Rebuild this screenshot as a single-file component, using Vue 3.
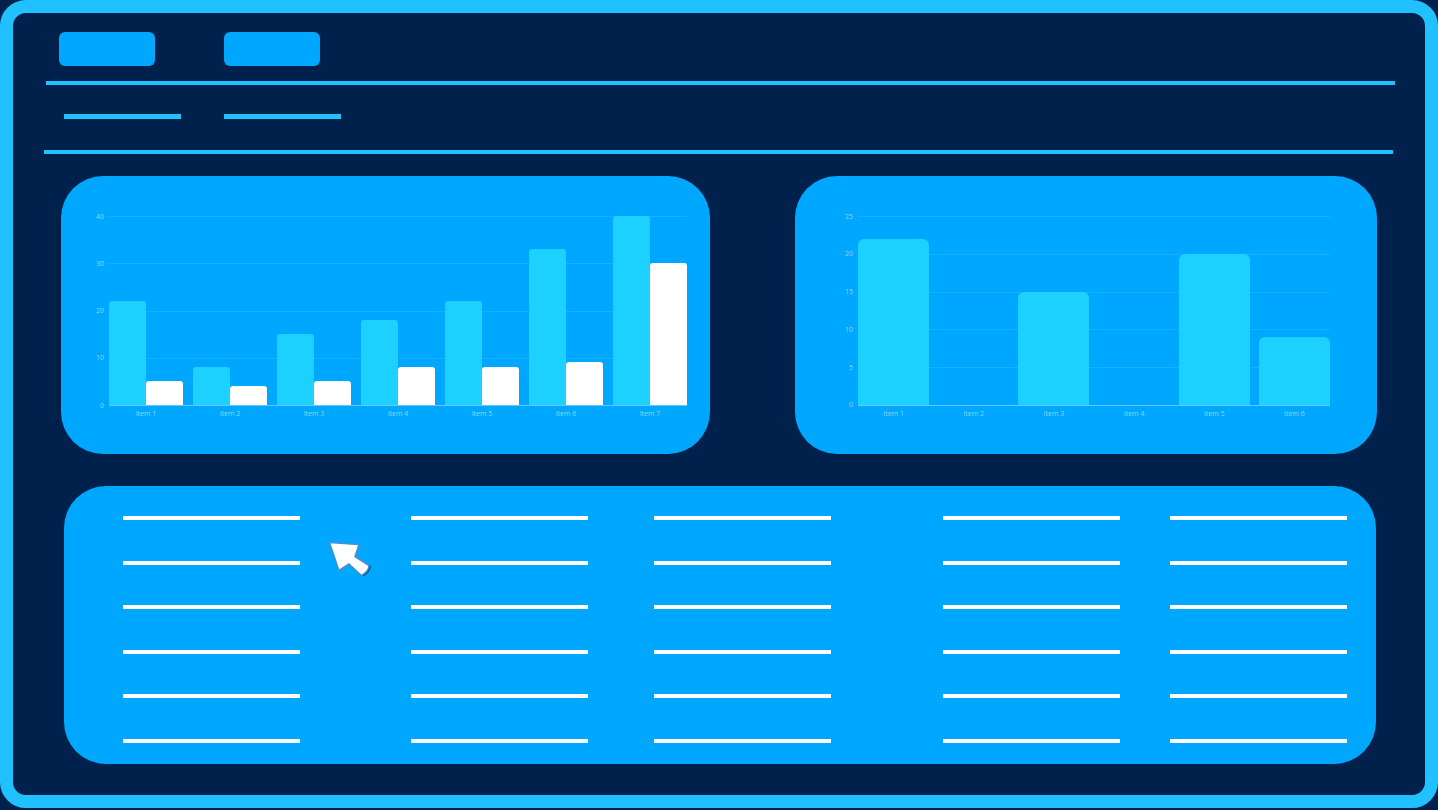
<script setup>
const comparison = {
  ticks: [40, 30, 20, 10, 0],
  max: 40,
  items: [
    [22, 5],
    [8, 4],
    [15, 5],
    [18, 8],
    [22, 8],
    [33, 9],
    [40, 30],
  ],
}
const single = {
  ticks: [25, 20, 15, 10, 5, 0],
  max: 25,
  items: [[22], [0], [15], [0], [20], [9]],
}
const charts = [
  { name: 'comparison', ...comparison },
  { name: 'single', ...single },
]
const columns = 5
const rows = 6
const percent = (value, max) => `${(value / max) * 100}%`
</script>

<template>
  <main class="window">
    <header class="toolbar">
      <button class="tool" type="button" aria-label="First action"></button>
      <button class="tool" type="button" aria-label="Second action"></button>
    </header>
    <nav class="tabs">
      <a class="tab" href="#" aria-label="First tab"></a>
      <a class="tab" href="#" aria-label="Second tab"></a>
    </nav>

    <div class="charts">
      <section v-for="chart in charts" :key="chart.name" class="panel chart" :class="chart.name">
        <div class="plot">
          <div class="grid">
            <div v-for="tick in chart.ticks" :key="tick" class="gridline">
              <span class="tick">{{ tick }}</span>
            </div>
          </div>
          <div class="groups">
            <div v-for="(values, i) in chart.items" :key="i" class="group">
              <div
                v-for="(value, j) in values"
                :key="j"
                class="bar"
                :class="{ light: j === 1 }"
                :style="{ height: percent(value, chart.max) }"
              ></div>
            </div>
          </div>
        </div>
        <div class="labels">
          <span v-for="(values, i) in chart.items" :key="i">Item {{ i + 1 }}</span>
        </div>
      </section>
    </div>

    <section class="panel list">
      <div v-for="c in columns" :key="c" class="column">
        <div v-for="r in rows" :key="r" class="entry"></div>
      </div>
      <svg class="pointer" width="44" height="38" viewBox="0 0 44 38">
        <path d="M41 24.5 43 26Q42.5 32 36 36L33 36Z" fill="#07578f" />
        <path
          d="M1.5 2.5 31 4.5 27 16.5 41 25.5Q41 31 33.5 35.5L21 24 11 30.5Z"
          fill="#fff"
          stroke="#4b8fd0"
          stroke-width="1.5"
          stroke-linejoin="round"
        />
      </svg>
    </section>
  </main>
</template>

<style>
body {
  margin: 0;
  background: #00214c;
}
</style>

<style scoped>
.window {
  box-sizing: border-box;
  min-height: 808px;
  border: 13px solid #21c0ff;
  border-radius: 26px;
  padding: 0 32px 31px 31px;
  background: #00214c;
  font-family: "Open Sans", "Noto Sans", sans-serif;
}
.toolbar {
  display: flex;
  gap: 69px;
  margin-left: 2px;
  margin-right: -2px;
  padding: 19px 13px 15px;
  border-bottom: 4px solid #21c0ff;
}
.tool {
  width: 96px;
  height: 34px;
  border: 0;
  border-radius: 6px;
  padding: 0;
  background: #00a7ff;
}
.tabs {
  display: flex;
  gap: 43px;
  padding: 29px 20px 31px;
  border-bottom: 4px solid #21c0ff;
}
.tab {
  width: 117px;
  height: 5px;
  background: #21c0ff;
}
.charts {
  display: grid;
  grid-template-columns: 649fr 582fr;
  gap: 85px;
  margin: 22px 16px 32px 17px;
}
.panel {
  box-sizing: border-box;
  height: 278px;
  border-radius: 42px;
  background: #00a7ff;
}
.chart {
  --gap: 10px;
  --radius: 3px;
  padding: 40px 23px 0 48px;
}
.single {
  --gap: 9px;
  --radius: 6px;
  padding: 40px 47px 0 63px;
}
.plot {
  position: relative;
  height: 189px;
  border-bottom: 1px solid #62c6ff;
}
.grid {
  display: flex;
  flex-direction: column;
  justify-content: space-between;
  height: 190px;
}
.gridline {
  display: flex;
  align-items: center;
  height: 1px;
  background: #1aafff;
}
.gridline:last-child {
  background: none;
}
.tick {
  width: 24px;
  margin-left: -29px;
  text-align: right;
}
.tick,
.labels {
  color: #8ad6ff;
  font-size: 7px;
  line-height: 10px;
}
.groups {
  position: absolute;
  inset: 0;
}
.groups,
.labels {
  display: grid;
  grid-auto-flow: column;
  grid-auto-columns: minmax(0, 1fr);
  gap: var(--gap);
}
.group {
  display: flex;
  align-items: flex-end;
}
.bar {
  flex: 1;
  border-radius: var(--radius) var(--radius) 0 0;
  background: #1cd1ff;
}
.light {
  background: #fff;
}
.labels {
  margin-top: 3px;
  text-align: center;
}
.list {
  position: relative;
  display: grid;
  grid-template-columns: 177fr 111fr 177fr 66fr 177fr 112fr 177fr 50fr 177fr;
  margin: 0 17px 0 20px;
  padding: 30px 29px 21px 59px;
}
.column {
  display: flex;
  flex-direction: column;
  justify-content: space-between;
}
.column:nth-child(1) {
  grid-column: 1;
}
.column:nth-child(2) {
  grid-column: 3;
}
.column:nth-child(3) {
  grid-column: 5;
}
.column:nth-child(4) {
  grid-column: 7;
}
.column:nth-child(5) {
  grid-column: 9;
}
.entry {
  height: 4px;
  background: #fff;
}
.pointer {
  position: absolute;
  left: 264px;
  top: 54px;
}
</style>
